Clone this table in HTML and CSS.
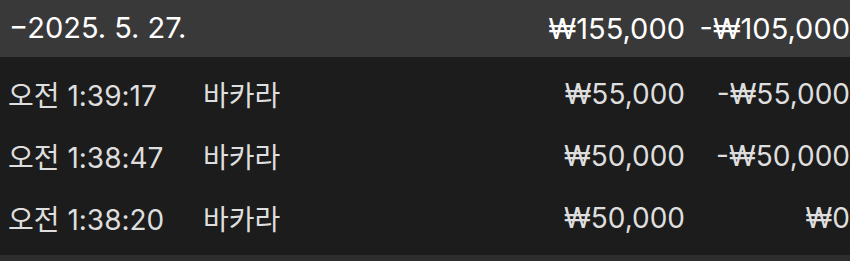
FILE: index.html
```html
<!DOCTYPE html>
<html lang="ko">
<head>
  <meta charset="UTF-8" />
  <meta name="viewport" content="width=device-width, initial-scale=1.0" />
  <title>내역</title>
  <link rel="stylesheet" href="styles.css">
</head>
<body>
  <section class="day">
    <div class="day-head">
      <span class="day-date">−2025. 5. 27.</span>
      <span class="amt bet">₩155,000</span>
      <span class="amt result">-₩105,000</span>
    </div>
    <ul class="rows">
      <li class="row">
        <span class="time">오전 1:39:17</span>
        <span class="game">바카라</span>
        <span class="amt bet">₩55,000</span>
        <span class="amt result">-₩55,000</span>
      </li>
      <li class="row">
        <span class="time">오전 1:38:47</span>
        <span class="game">바카라</span>
        <span class="amt bet">₩50,000</span>
        <span class="amt result">-₩50,000</span>
      </li>
      <li class="row">
        <span class="time">오전 1:38:20</span>
        <span class="game">바카라</span>
        <span class="amt bet">₩50,000</span>
        <span class="amt result">₩0</span>
      </li>
    </ul>
  </section>
  <div class="footer-strip"></div>
</body>
</html>
```

FILE: styles.css
```css
:root {
  --head-bg: #393939;
  --body-bg: #1c1c1c;
  --strip-bg: #2d2d2d;
  --text: #ffffff;
  --text-soft: #dedede;
}
html, body {
  margin: 0;
  padding: 0;
  background: var(--body-bg);
  font-family: Inter, 'Noto Sans CJK KR', sans-serif;
  height: 100%;
  overflow: hidden;
}
.day-head {
  display: grid;
  grid-template-columns: 1fr 180px 165px;
  align-items: center;
  height: 57px;
  padding: 0 0 0 9px;
  background: var(--head-bg);
  color: var(--text);
  font-size: 29px;
  box-sizing: border-box;
}
.day-date {
  padding-bottom: 3px;
}
.rows {
  list-style: none;
  margin: 0;
  padding: 6px 0;
}
.row {
  display: grid;
  grid-template-columns: 195px 1fr 180px 165px;
  align-items: center;
  height: 62px;
  padding-left: 8px;
  color: var(--text-soft);
  font-size: 28px;
}
.amt {
  text-align: right;
  white-space: nowrap;
}
.footer-strip {
  height: 6px;
  background: var(--strip-bg);
}
```
